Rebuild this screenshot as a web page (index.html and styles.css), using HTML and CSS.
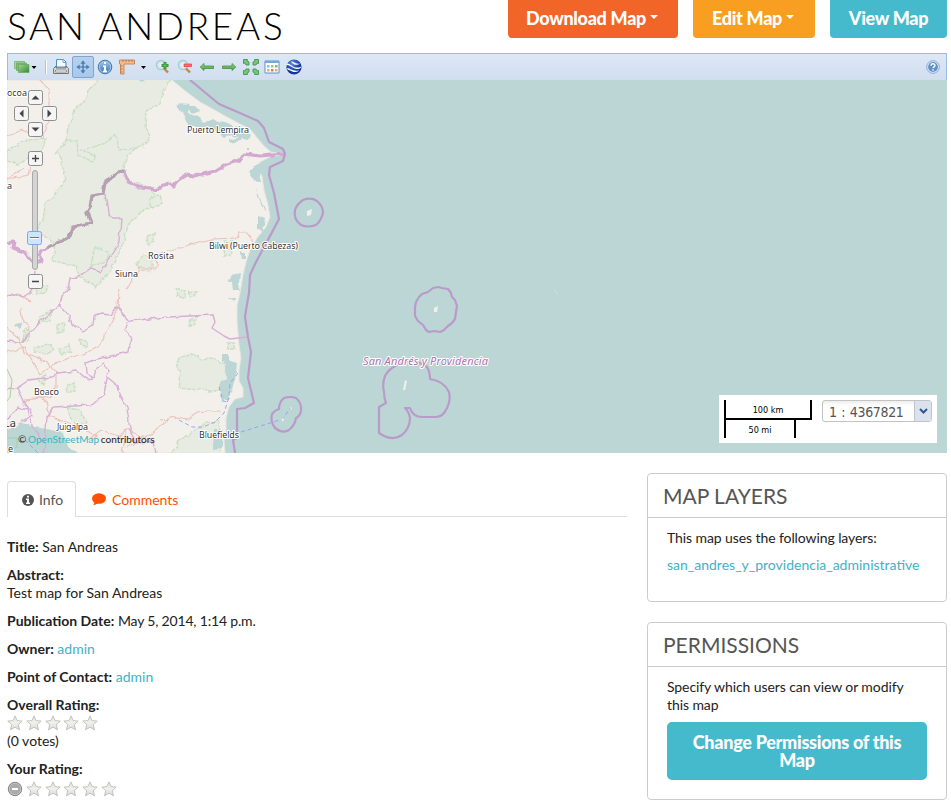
FILE: index.html
```html
<!DOCTYPE html>
<html lang="en">
<head>
<meta charset="utf-8">
<title>San Andreas</title>
<link rel="stylesheet" href="styles.css">
</head>
<body>
<svg class="defs" width="0" height="0" aria-hidden="true">
  <defs>
    <linearGradient id="starFill" x1="0" y1="0" x2="0" y2="1"><stop offset="0" stop-color="#e2e2e0"/><stop offset=".5" stop-color="#f0f0ee"/><stop offset="1" stop-color="#d8d8d6"/></linearGradient>
    <linearGradient id="green" x1="0" y1="0" x2="1" y2="1"><stop offset="0" stop-color="#a5d49a"/><stop offset="1" stop-color="#318c31"/></linearGradient>
    <linearGradient id="arrow" x1="0" y1="0" x2="0" y2="1"><stop offset="0" stop-color="#a7dc96"/><stop offset="1" stop-color="#3c9840"/></linearGradient>
    <linearGradient id="blue" x1="0" y1="0" x2="0" y2="1"><stop offset="0" stop-color="#9cc3e8"/><stop offset="1" stop-color="#3f78b5"/></linearGradient>
    <radialGradient id="lens"><stop offset="0" stop-color="#f4fafc"/><stop offset="1" stop-color="#bddbe3"/></radialGradient>
    <radialGradient id="globe" cx=".4" cy=".25"><stop offset="0" stop-color="#5f8ce8"/><stop offset="1" stop-color="#15379a"/></radialGradient>
    <filter id="ragged" filterUnits="userSpaceOnUse" x="0" y="70" width="320" height="390" color-interpolation-filters="sRGB"><feTurbulence type="fractalNoise" baseFrequency=".16" numOctaves="1" seed="4"/><feDisplacementMap in="SourceGraphic" scale="6" xChannelSelector="R" yChannelSelector="G"/></filter>
    <symbol id="star" viewBox="0 0 16 16"><path d="M8 .9l2.100 4.700 5.100.5-3.900 3.500 1.200 5.200L8 12.200l-4.500 2.600 1.200-5.200L.8 6.100l5.100-.5z" fill="url(#starFill)" stroke="#bdbdbb" stroke-width=".9" stroke-linejoin="round"/></symbol>
  </defs>
</svg>
<div class="page">
  <header class="page-header">
    <h1>SAN ANDREAS</h1>
    <div class="actions">
      <a class="btn btn-download">Download Map<i class="caret"></i></a>
      <a class="btn btn-edit">Edit Map<i class="caret"></i></a>
      <a class="btn btn-view">View Map</a>
    </div>
  </header>

  <section class="viewer">
    <div class="toolbar">
      <svg class="tool t-layers" width="24" height="16" viewBox="0 0 24 16"><g stroke="#5da556" stroke-width=".6"><path d="M1.500 2.500h10v7h-10z" fill="#a8d4a2"/><path d="M3.500 4h10v7.500h-10z" fill="#7fbd78"/><path d="M5.500 5.500h10.500v8H5.500z" fill="url(#green)"/></g><path d="M18.500 7h5L21 10z" fill="#000"/></svg>
      <span class="divider"></span>
      <svg class="tool t-print" width="16" height="16" viewBox="0 0 16 16"><path d="M3.500 8V.6h7L13 3v5z" fill="#f8fcff" stroke="#4c91cf"/><path d="M10 1v2.500h3" fill="none" stroke="#4c91cf" stroke-width=".8"/><path d="M3 7L.6 9.500V14.500h14.800V9.500L13 7v2H3z" fill="#dedede" stroke="#666" stroke-width=".9"/><path d="M2.500 11h11v2h-11z" fill="#fafafa" stroke="#777" stroke-width=".7"/></svg>
      <span class="tool-active"><svg width="16" height="16" viewBox="0 0 16 16"><path d="M8 2v12M2 8h12" stroke="#3f72a8" stroke-width="1.200"/><path d="M8 1.500l2.600 3.200H5.400zM8 14.500l2.600-3.200H5.400zM1.500 8l3.200-2.600v5.200zM14.500 8l-3.200-2.600v5.200z" fill="#4c7eb3"/></svg></span>
      <svg class="tool t-info" width="16" height="16" viewBox="0 0 16 16"><circle cx="8" cy="8" r="6.800" fill="#72a5d6" stroke="#4478af"/><circle cx="8" cy="8" r="5.600" fill="url(#blue)" stroke="#b4d2ee" stroke-width=".7"/><path d="M7 3h2v2H7zM6 6.500h3v5h1V13H6v-1.500h1V8H6z" fill="#fff"/></svg>
      <svg class="tool t-measure" width="28" height="16" viewBox="0 0 28 16"><path d="M.5 1h15v4H5v10H1.500V5h-1z" fill="#f0bd94" stroke="#cf8757"/><path d="M4 1v2M7 1v2M10 1v2M13 1v2M1.500 7h2M1.500 10h2M1.500 13h2" stroke="#a4572d" stroke-width=".7"/><path d="M22 7h5l-2.500 3z" fill="#000"/></svg>
      <svg class="tool t-zoomin" width="16" height="16" viewBox="0 0 16 16"><circle cx="6" cy="6" r="4.700" fill="url(#lens)" stroke="#a6cbd4" stroke-width="1.200"/><path d="M9 9.500l4 4" stroke="#c68743" stroke-width="2.400"/><path d="M10 3v7M6.500 6.500h7" stroke="#3c983b" stroke-width="3"/><path d="M10 4v5M7.500 6.500h5" stroke="#65b95c"/></svg>
      <svg class="tool t-zoomout" width="16" height="16" viewBox="0 0 16 16"><circle cx="6" cy="6" r="4.700" fill="url(#lens)" stroke="#a6cbd4" stroke-width="1.200"/><path d="M9 9.500l4 4" stroke="#c68743" stroke-width="2.400"/><path d="M7 5h7.500v2.500H7z" fill="#f4736d" stroke="#e13b37" stroke-width=".7"/></svg>
      <svg class="tool t-prev" width="16" height="16" viewBox="0 0 16 16"><path d="M1.200 8L5 4.500V7h9.500v2.500H5v2z" fill="url(#arrow)" stroke="#41933d" stroke-width=".8"/></svg>
      <svg class="tool t-next" width="16" height="16" viewBox="0 0 16 16"><path d="M14.800 8L11 4.500V7H1.500v2.500H11v2z" fill="url(#arrow)" stroke="#41933d" stroke-width=".8"/></svg>
      <svg class="tool t-extent" width="18" height="18" viewBox="0 0 18 18"><g fill="#7cc57a" stroke="#40964a" stroke-width=".9"><path d="M1.500 1.500h4L5 3l2 1v3H4L3 5l-1.500.5zM16.500 1.500v4L15 5l-1 2h-3V4l2-1-.5-1.500zM1.500 16.500v-4L3 13l1-2h3v3l-2 1 .5 1.500zM16.500 16.500h-4L13 15l-2-1v-3h3l1 2 1.500-.5z"/></g></svg>
      <svg class="tool t-legend" width="16" height="16" viewBox="0 0 16 16"><path d="M1 2h14v12H1z" fill="#fff" stroke="#5e91c8"/><path d="M1 2h14v2H1z" fill="#75a8dc"/><path d="M3 6h2.500v2.500H3z" fill="#8ebfe7"/><path d="M7 6h2.500v2.500H7z" fill="#99c77a"/><path d="M11 6h2.500v2.500H11z" fill="#80b76b"/><path d="M3 10h2.500v2.500H3z" fill="#f6ad52"/><path d="M7 10h2.500v2.500H7z" fill="#ed7247"/><path d="M11 10h2.500v2.500H11z" fill="#eeb055"/></svg>
      <svg class="tool t-earth" width="16" height="16" viewBox="0 0 16 16"><circle cx="8" cy="8" r="7.600" fill="url(#globe)"/><path d="M1 4.500C4 4 6 8 10 8.500s4-1 5.500-1c-1.500 3-4 3-7 2S4 5.500.5 6zM.7 9.500c3-1 5 3 12.500 2-4 3-7 1-9 0s-2.500-.5-3.500-2zM5 2.500c3 0 4 3 9 2-3 2.500-6 1-7 0S5 3.500 5 2.500z" fill="#f4f8ff"/></svg>
      <svg class="tool t-help" width="16" height="16" viewBox="0 0 16 16"><circle cx="8" cy="8" r="6.300" fill="#e5eef8" stroke="#85a8cf"/><circle cx="8" cy="8" r="4.900" fill="#5e91c8"/><path d="M6 6.700C6 4.200 10 4.200 10 6.600c0 1.300-2 1.300-2 2.700M8 10.200v1.500" fill="none" stroke="#fff" stroke-width="1.400"/></svg>
    </div>

    <div class="map">
      <svg class="map-art" width="940" height="373" viewBox="7 80 940 373">
        <rect x="7" y="80" width="940" height="373" fill="#bcd6d5"/>
        <path class="land" d="M7 80H172L184 90 200 102 211 108 225 116 238 123 250 129 258 139 264 146 271 152 283 154 270 157 260 162 257 168 262 176 264 190 268 205 270 217 266 227 257 238 250 250 246 262 243 275 240 293 237 306 237 320 239 345 241 358 239 370 239 381 243 388 243 397 235 399 229 407 226 418 226 430 224 440 225 453H7z"/>
        <g class="park" filter="url(#ragged)">
          <path d="M98 78L91 88 84 101 75 110 69 125 65 141 58 151 62 164 66 180 53 196 45 205 43 220 36 231 55 243 53 261 76 266 79 277 96 287 111 270 123 244 128 226 139 213 159 204 150 187 127 180 124 166 128 154 138 147 150 140 145 126 146 111 158 105 163 92 171 78z"/>
          <path d="M55 153L66 141 77 141 78 155 92 162 97 157 82 150 102 145 116 134 119 150 144 147"/>
          <path d="M177 360L181 357 195 354 203 360 214 358 220 362 229 363 234 374 230 382 225 387 214 392 205 390 186 389 178 388 180 374z"/>
          <path d="M167 460L179 441 190 434 200 427 206 423 219 421 222 460z"/>
          <path d="M7 151L24 140 47 139 39 152 19 164 7 160zM137 263L144 254 153 260 151 271 139 270zM147 236L154 234 154 242 148 244zM150 197L160 196 162 202 154 208 150 205zM40 315L52 311 50 320 40 322zM57 325L65 323 64 331 57 332zM35 348L49 344 54 349 49 353 35 352zM59 349L69 344 71 352 62 355zM80 339L88 342 86 348 81 345zM67 385L74 382 75 391 68 392zM67 407L81 411 86 423 76 426 70 415zM25 328L30 330 29 340 23 342zM38 379L45 375 43 384zM227 343h8v6h-7zM190 319h6l-1 6h-6zM177 290h7v7h-6zM189 291l8 1-5 6zM35 285l12 1-2 7-9 1z"/>
          <path d="M92 260L95 246 109 254 108 260 91 267zM225 241h7l-2 15h-6z"/>
        </g>
        <g class="water" filter="url(#ragged)">
          <path d="M176 104L190 105 189 113 195 117 187 122 184 116zM187 106h8l5 5-6 4zM187 118L199 116 203 122 214 120 224 122 237 127 248 131 251 137 245 140 232 135 224 138 214 128 199 128 188 125zM230 140l12-3-2 4-10 2zM135 78h14l-7 4zM251 169l8-6 3 7-2 12-3 0-7-6zM258 215l7 3-2 14-5-3zM232 275l9-2-2 17-6 0-1-7-4-1zM224 359l13 4-2 18-5 12-9 10-2-17 7-8zM214 430h9l-1 18-9 1zM222 385h8v14h-8zM256 187l4 12 6 13-2-1-6-14zM222 354h6v7h-6zM240 252h6v8h-5zM229 297h7l-3 4z"/>
          <path d="M0 453V433L22 423 40 427 51 430 63 432 66 443 84 460H7zM14 325l9-4-4 9zM246 147h3v3h-3z"/>
        </g>
        <g class="road" filter="url(#ragged)">
          <path d="M3 138L22 130 43 139 49 118 49 90 41 81 36 76M3 181L24 169M3 296L18 294 30 301M33 155L29 175 7 179M120 460L125 440 125 429M127 289L139 268 156 268 157 257 164 252 175 250 194 243 212 239 237 238 240 233 247 233 254 242M119 290L118 308 111 323 101 344 88 352 55 363 40 374 25 348 3 353M3 325L19 338 24 352 36 357 48 364 56 373 56 388 50 397 24 400M21 309L22 318 28 326 25 340M23 402L38 397 46 401 50 416 75 426 97 436 90 441M88 440L101 430 119 436 127 429 145 438 126 447M145 438L170 418M160 421L176 417 189 419 196 412 207 411 220 411"/>
        </g>
        <g class="admin" filter="url(#ragged)">
          <path class="major" d="M3 243L14 242 13 248 24 252 34 263 42 261 39 254 47 248 62 241 69 237 73 227 91 223 87 213 90 207 92 196 103 194 105 182 113 177 117 172 124 171 129 182 139 187 150 188 157 190 164 184 170 183 174 187 177 181 186 175 194 176 216 171 227 164 240 160 244 154 260 156 272 155 284 154"/>
          <path d="M105 194L108 213 113 218 121 218 119 242 101 272 91 268 78 277 70 278 68 289 62 296 60 306 45 317 34 329 22 342 3 341M3 297L14 294 23 298 31 293 34 285 35 270M60 307L69 316 71 324 84 331 93 325 94 316 101 314 111 315 117 307 129 321 168 317 213 315M129 321L125 330 131 337 129 352 111 356 94 360 86 363 87 373 94 377 97 367 104 363 108 371 107 377 118 386 121 397 127 407 130 429 135 443 153 442 156 453M93 378L87 379 77 371 57 373 51 377 29 380 17 388 24 403 32 414 22 422M107 378L104 394 91 405 74 406 54 407 47 418 44 453M3 425L18 407 27 410 32 425 45 443M3 391L17 388"/>
        </g>
        <g class="admin"><path d="M213 315L215 322 212 328 224 336 230 339 247 337"/></g>
        <path class="shade" filter="url(#ragged)" d="M47 248L62 241 69 237 73 227 91 223 87 213 90 207 92 196 103 194 105 182 113 177 117 172 124 171"/>
        <path d="M7 369L12 380 10 397 7 401M7 438h10v10H7" fill="none" stroke="#a0d5a0"/>
        <g class="sea-border">
          <path d="M190 80L219 104 233 110 258 121 264 128 269 142 283 149 285 154 283 161 270 167 269 175 274 193 279 219 270 236 256 262 250 275 249 293 246 310 245 317 248 337 251 352 248 378 254 403 245 408 237 409 237 438 233 440 235 453"/>
          <path d="M303 200Q311 197 317 201Q323 206 323 213Q321 221 316 225Q308 228 301 225Q293 219 295 210Q297 204 303 200z"/>
          <path d="M433 288L438 287 442 288 448 289 451 293 452 297 455 300 457 306 456 312 455 319 452 323 448 326 444 330 440 332 434 331 429 332 426 330 423 325 418 321 415 316 415 307 416 302 419 297 422 294 428 292z"/>
          <path d="M395 366Q388 370 385 376 382 384 384 392 384 398 386 403L379 407V433Q392 442 402 435 410 428 410 418 409 412 405 408L410 408Q413 417 422 417H436Q443 417 447 408 451 400 449 392 444 381 430 379 430 372 427 367 411 356 395 366z"/>
          <path d="M284 398Q290 396 296 398 302 403 301 411 300 416 296 418 295 425 289 430 283 434 275 428 270 421 272 414 275 410 279 409 279 402 284 398z"/>
        </g>
        <path class="ferry" d="M241 432L283 419 290 408M179 420L192 427 203 427 215 422 224 413 229 397 230 383 238 373M219 387L223 401 228 402M25 440L38 453"/>
        <path d="M307 211l5-2-1 6-4 1zM434 308l4-2-1 6-3 0zM405 380l2 1-2 9-2 0zM281 419l3-1-1 4zM290 407l2 1-1 2z" fill="#f3efe9"/>
        <path d="M554 289l4 6" stroke="#cbdfda"/>
        <g class="places">
          <text x="7" y="96" textLength="20">ocoa</text><text x="7" y="189">a</text>
          <text x="187" y="133" textLength="62">Puerto Lempira</text>
          <text x="209" y="249" textLength="89">Bilwi (Puerto Cabezas)</text>
          <text x="148" y="259" textLength="26">Rosita</text>
          <text x="115" y="277" textLength="23">Siuna</text>
          <text x="34" y="395" textLength="25">Boaco</text>
          <text x="57" y="430" textLength="31">Juigalpa</text>
          <text x="199" y="438" textLength="40">Bluefields</text>
          <text x="5" y="427" class="city" textLength="11">ua</text><text x="8" y="452">e</text>
          <text class="region" x="363" y="365" textLength="125">San Andrés y Providencia</text>
        </g>
      </svg>
      <svg class="map-nav" width="44" height="212" viewBox="13 80 44 212">
        <g fill="#f5f5f5" stroke="#8d8d8d"><rect x="28.500" y="90.500" width="14" height="14" rx="2"/><rect x="14.500" y="106.500" width="14" height="14" rx="2"/><rect x="42.500" y="106.500" width="14" height="14" rx="2"/><rect x="28.500" y="122.500" width="14" height="14" rx="2"/><rect x="28.500" y="151.500" width="14" height="14" rx="2"/><rect x="28.500" y="274.500" width="14" height="14" rx="2"/></g>
        <path d="M31.500 99.500h8l-4-4zM31.500 127.500h8l-4 4zM23.500 109.500v8l-4-4zM47.500 109.500v8l4-4z" fill="#444"/>
        <path d="M32 158.500h7M35.500 155v7M32 281.500h7" stroke="#444" stroke-width="1.300"/>
        <rect x="32.500" y="170.500" width="5" height="99" rx="2.500" fill="#d4d4d4" stroke="#a9a9a9"/>
        <rect x="27.500" y="231.500" width="14" height="13" rx="2" fill="#cfe4ff" stroke="#78a9df"/><path d="M30 237.500h9" stroke="#3e7ed0"/><path d="M30 238.500h9" stroke="#fff"/>
      </svg>
      <div class="attribution">© <a>OpenStreetMap</a> contributors</div>
      <div class="scale">
        <div class="scale-lines"><div class="scale-km">100 km</div><div class="scale-mi">50 mi</div></div>
        <div class="scale-select"><span>1 : 4367821</span><i><svg width="9" height="7" viewBox="0 0 9 7"><path d="M1 1l3.500 3.500L8 1" fill="none" stroke="#2f5796" stroke-width="2"/></svg></i></div>
      </div>
    </div>
  </section>

  <div class="columns">
    <main class="details">
      <nav class="tabs">
        <a class="tab tab-info"><svg width="12" height="12" viewBox="0 0 12 12"><circle cx="6" cy="6" r="6" fill="#555"/><path d="M5 1.800h2v1.700H5zM4 4.500h3v4h1V10H4V8.500h1V6H4z" fill="#fff"/></svg>Info</a>
        <a class="tab tab-comments"><svg width="14" height="13" viewBox="0 0 14 13"><ellipse cx="7" cy="5.500" rx="7" ry="5.300" fill="#ff4f00"/><path d="M2.500 8.500Q2.500 11 1 12.300 4 12 6 10z" fill="#ff4f00"/></svg>Comments</a>
      </nav>
      <div class="info">
        <p><b>Title:</b> San Andreas</p>
        <p><b>Abstract:</b><br>Test map for San Andreas</p>
        <p><b>Publication Date:</b> <span class="date">May 5, 2014, 1:14 p.m.</span></p>
        <p><b>Owner:</b> <a>admin</a></p>
        <p><b>Point of Contact:</b> <a>admin</a></p>
        <div class="rating"><b>Overall Rating:</b>
          <div class="stars"><svg><use href="#star"/></svg><svg><use href="#star"/></svg><svg><use href="#star"/></svg><svg><use href="#star"/></svg><svg><use href="#star"/></svg></div>
          (0 votes)</div>
        <div class="rating"><b>Your Rating:</b>
          <div class="stars stars-own"><svg viewBox="0 0 16 16"><circle cx="8" cy="8" r="6.700" fill="#aaa" stroke="#858585"/><circle cx="8" cy="8" r="5.700" fill="none" stroke="#ccc" stroke-width=".7"/><path d="M4.500 6.500h7v3h-7z" fill="#fff" stroke="#888" stroke-width=".5"/></svg><svg><use href="#star"/></svg><svg><use href="#star"/></svg><svg><use href="#star"/></svg><svg><use href="#star"/></svg><svg><use href="#star"/></svg></div></div>
      </div>
    </main>
    <aside class="sidebar">
      <section class="panel panel-layers"><h2>MAP LAYERS</h2><div class="panel-body"><p>This map uses the following layers:</p><a class="layer-link">san_andres_y_providencia_administrative</a></div></section>
      <section class="panel panel-permissions"><h2>PERMISSIONS</h2><div class="panel-body"><p>Specify which users can view or modify<br>this map</p><a class="btn-permissions">Change Permissions of this<br>Map</a></div></section>
    </aside>
  </div>
</div>
</body>
</html>
```
FILE: styles.css
```css
* { box-sizing: border-box; }
body { margin: 0; background: #fff; color: #222; font: 14px/18px Lato, "Liberation Sans", sans-serif; height: 807px; overflow: hidden; }
a { color: #46b0c4; text-decoration: none; }
p { margin: 0; }
svg { display: block; flex: none; }
.defs { position: absolute; }
.page { padding: 0 4px 0 7px; }

.page-header { height: 53px; display: flex; justify-content: space-between; align-items: flex-start; }
h1 { margin: 6px 0 0; font-size: 37px; line-height: 40px; font-weight: 300; letter-spacing: 2.700px; color: #000; white-space: nowrap; }
.actions { display: flex; gap: 15px; }
.btn { height: 38px; border-radius: 0 0 4px 4px; color: #fff; font-size: 18px; line-height: 37px; font-weight: 900; letter-spacing: -.300px; display: flex; justify-content: center; white-space: nowrap; }
.btn-download { width: 170px; padding-right: 2px; background: #f26529; }
.btn-edit { width: 122px; padding-right: 2px; background: #f89e21; }
.btn-view { width: 117px; background: #45bacc; }
.caret { width: 0; height: 0; margin: 15px 0 0 4px; border: 4px solid transparent; border-top-color: #fff; border-bottom: 0; }

.toolbar { height: 27px; display: flex; align-items: center; border: 1px solid #99bbe8; border-bottom: 0; background: linear-gradient(#dde8f5, #d1deef); }
.t-layers { margin-left: 5px; }
.divider { width: 2px; height: 14px; margin-left: 8px; background: #98c8ff; border-right: 1px solid #fff; }
.t-print { margin-left: 6px; }
.tool-active { width: 22px; height: 22px; margin-left: 3px; display: flex; align-items: center; justify-content: center; border: 1px solid #81a4d0; border-radius: 2px; background: linear-gradient(#b5d2ee, #a6c8ed); }
.t-info { margin-left: 3px; }
.t-measure { margin-left: 6px; }
.t-zoomin { margin-left: 8px; }
.t-zoomout, .t-prev, .t-next, .t-earth { margin-left: 6px; }
.t-extent { margin-left: 5px; }
.t-legend { margin-left: 4px; }
.t-help { margin-left: auto; margin-right: 5px; }

.map { position: relative; height: 373px; overflow: hidden; }
.land { fill: #f3efea; stroke: #e8e6df; }
.park path { fill: #e7ebe1; stroke: #c8dfc4; stroke-width: 1.400; stroke-dasharray: 4 1; }
.water path { fill: #bcd6d5; }
.road path { fill: none; stroke: #eac2bb; stroke-width: 1.100; }
.admin path { fill: none; stroke: #d6b1d5; stroke-width: 1.400; stroke-linejoin: round; }
.admin .major { stroke-width: 3; stroke: #d3a9d2; }
.shade { fill: none; stroke: #b3a1af; stroke-width: 3; }
.sea-border path { fill: none; stroke: #b99bc9; stroke-width: 2.200; stroke-linejoin: round; }
.ferry { fill: none; stroke: #8c9ff0; stroke-width: .9; stroke-dasharray: 4 3; }
.places { font: 9px "Noto Sans", "DejaVu Sans", sans-serif; fill: #333; stroke: #fff; stroke-width: 2px; paint-order: stroke; stroke-linejoin: round; }
.places .city { font-size: 11px; }
.places .region { font-size: 11px; font-style: italic; fill: #ad73ad; }
.map-nav { position: absolute; left: 6px; top: 0; }
.attribution { position: absolute; left: 11px; bottom: 7px; font-size: 10px; line-height: 14px; color: #222; word-spacing: -1px; white-space: nowrap; }
.attribution a { color: #37b3c6; letter-spacing: .080px; }
.scale { position: absolute; right: 10px; bottom: 10px; width: 218px; height: 48px; padding: 5px; display: flex; justify-content: space-between; background: #fff; }
.scale-lines { width: 88px; color: #000; font: 9px/20px "DejaVu Sans Condensed", "DejaVu Sans", sans-serif; text-align: center; }
.scale-km { width: 88px; height: 20px; border: 2px solid #000; border-top: 0; }
.scale-mi { width: 72px; height: 18px; border: 2px solid #000; border-width: 0 2px; }
.scale-select { width: 110px; height: 22px; display: flex; border: 1px solid #c3c3c3; border-radius: 3px; font: 14px/23px "DejaVu Sans Condensed", "DejaVu Sans", sans-serif; color: #555; white-space: nowrap; background: linear-gradient(#eee, #fff 5px); }
.scale-select span { width: 91px; padding-left: 6px; letter-spacing: -.350px; word-spacing: 1px; }
.scale-select i { width: 17px; display: flex; align-items: center; justify-content: center; background: #dce1ee; border-left: 1px solid #c0c4d0; }

.columns { display: flex; justify-content: space-between; }
.details { width: 620px; padding-top: 28px; }
.tabs { height: 36px; display: flex; border-bottom: 1px solid #ddd; }
.tab { height: 36px; display: flex; align-items: center; line-height: 36px; }
.tab-info { width: 69px; padding-left: 14px; gap: 5px; border: 1px solid #ddd; border-bottom: 0; border-radius: 4px 4px 0 0; background: #fff; color: #555; }
.tab-comments { padding: 1px 0 0 16px; gap: 6px; color: #ff4f00; }
.info { padding-top: 21px; }
.info p, .rating { margin-bottom: 10px; }
.date { letter-spacing: -.180px; }
.stars { height: 18px; display: flex; align-items: center; gap: 2.800px; }
.stars svg { width: 16px; height: 16px; }
.stars-own { padding-top: 4px; }

.sidebar { width: 300px; padding-top: 20px; }
.panel { border: 1px solid #ccc; border-radius: 4px; }
.panel-layers { height: 129px; margin-bottom: 20px; }
.panel-permissions { height: 178px; }
h2 { margin: 0; padding-left: 15px; height: 44px; border-bottom: 1px solid #ccc; font-size: 21px; line-height: 44px; font-weight: 400; color: #555; }
.panel-body { padding: 11px 19px; white-space: nowrap; }
.panel-body p { letter-spacing: -.090px; }
.layer-link { display: block; margin-top: 9px; }
.btn-permissions { display: block; height: 58px; margin-top: 8px; padding-top: 11px; border-radius: 5px; background: #45bacc; color: #fff; font-size: 18px; line-height: 18px; font-weight: 900; letter-spacing: -.280px; text-align: center; }
```
